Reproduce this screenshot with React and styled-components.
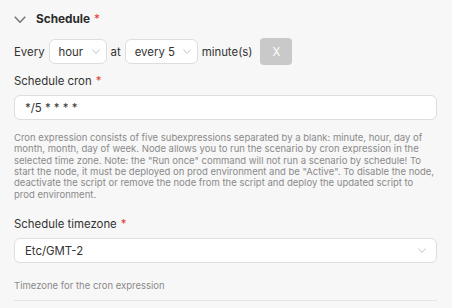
import React from "react";
import styled, { createGlobalStyle } from "styled-components";

const GlobalStyle = createGlobalStyle`
  html, body {
    margin: 0;
    padding: 0;
    background: #f7f7f7;
    font-family: Inter, "Noto Sans", sans-serif;
    color: #333;
  }
`;

const Panel = styled.div`
  width: 452px;
  height: 308px;
  box-sizing: border-box;
  padding: 8px 15px 0 14px;
  background: #f7f7f7;
  overflow: hidden;
`;

const Header = styled.div`
  display: flex;
  align-items: center;
  height: 22px;
  gap: 10px;
`;

const Title = styled.div`
  font-size: 11.8px;
  font-weight: 700;
  color: #2b2b2b;
`;

const Star = styled.span`
  color: #e53935;
  margin-left: 4px;
  font-weight: 400;
`;

const Row = styled.div`
  display: flex;
  align-items: center;
  gap: 4px;
  height: 25px;
  margin-top: 9px;
  font-size: 11.4px;
  color: #333;
`;

const MiniSelect = styled.div`
  display: flex;
  align-items: center;
  justify-content: space-between;
  box-sizing: border-box;
  width: ${({ w }) => w}px;
  height: 25px;
  padding: 0 6px 0 9px;
  background: #fff;
  border: 1px solid #dedede;
  border-radius: 6px;
`;

const ClearButton = styled.div`
  display: flex;
  align-items: center;
  justify-content: center;
  width: 32px;
  height: 27px;
  margin-left: 4px;
  background: #c9c9c9;
  border-radius: 4px;
  color: #fff;
  font-size: 11.4px;
`;

const Label = styled.div`
  font-size: 11.4px;
  line-height: 15px;
  color: #333;
  margin-top: ${({ top }) => top}px;
`;

const Field = styled.div`
  display: flex;
  align-items: center;
  justify-content: space-between;
  box-sizing: border-box;
  height: 25px;
  margin-top: 6px;
  padding: 0 10px 0 10px;
  background: #fff;
  border: 1px solid #dedede;
  border-radius: 6px;
  font-size: 11.4px;
  color: #333;
`;

const Hint = styled.div`
  font-size: 9.5px;
  line-height: 11.35px;
  color: #8a8a8a;
  margin-top: ${({ top }) => top}px;
`;

const Divider = styled.div`
  height: 1px;
  background: #e4e4e4;
  margin-top: 9px;
`;

const Chevron = ({ w = 8, h = 5, color = "#c4c4c4", stroke = 1 }) => (
  <svg width={w} height={h} viewBox={`0 0 ${w} ${h}`} fill="none">
    <path
      d={`M${stroke / 2} ${stroke / 2} L${w / 2} ${h - stroke / 2} L${w - stroke / 2} ${stroke / 2}`}
      stroke={color}
      strokeWidth={stroke}
    />
  </svg>
);

export default function App() {
  return (
    <>
      <GlobalStyle />
      <Panel>
        <Header>
          <Chevron w={12} h={7} color="#7a7a7a" stroke={1.6} />
          <Title>
            Schedule<Star>*</Star>
          </Title>
        </Header>
        <Row>
          <span>Every</span>
          <MiniSelect w={58}>
            hour <Chevron />
          </MiniSelect>
          <span>at</span>
          <MiniSelect w={73}>
            every 5 <Chevron />
          </MiniSelect>
          <span>minute(s)</span>
          <ClearButton>X</ClearButton>
        </Row>
        <Label top={10}>
          Schedule cron<Star>*</Star>
        </Label>
        <Field>*/5 * * * *</Field>
        <Hint top={12}>
          Cron expression consists of five subexpressions separated by a blank:
          minute, hour, day of month, month, day of week. Node allows you to run
          the scenario by cron expression in the selected time zone. Note: the
          "Run once" command will not run a scenario by schedule! To start the
          node, it must be deployed on prod environment and be "Active". To
          disable the node, deactivate the script or remove the node from the
          script and deploy the updated script to
          <br />
          prod environment.
        </Hint>
        <Label top={17}>
          Schedule timezone<Star>*</Star>
        </Label>
        <Field>
          Etc/GMT-2 <Chevron />
        </Field>
        <Hint top={17}>Timezone for the cron expression</Hint>
        <Divider />
      </Panel>
    </>
  );
}
